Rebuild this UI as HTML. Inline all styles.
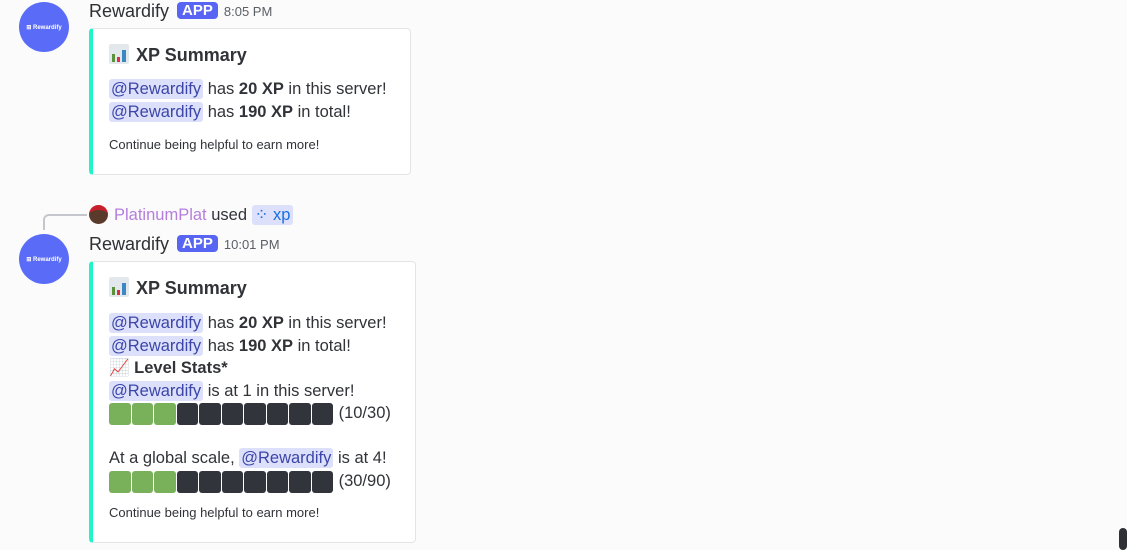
<!DOCTYPE html>
<html><head><style>
body{margin:0;width:1127px;height:550px;background:#fbfbfb;font-family:"Liberation Sans",sans-serif;color:#313338;position:relative;overflow:hidden}
.a{position:absolute}
.av{width:50px;height:50px;border-radius:50%;background:#5a6cf7;color:#fff;font-size:6px;font-weight:bold;display:flex;align-items:center;justify-content:center}
.name{font-size:18px;color:#2e3035;white-space:nowrap}
.app{display:inline-block;background:#5865f2;color:#fff;font-weight:bold;font-size:15px;line-height:17px;padding:0 5px;border-radius:4px;vertical-align:2px;margin-left:3px}
.time{font-size:13px;color:#5c5e66;margin-left:6px;vertical-align:1px}
.card{background:#fff;border:1px solid #e3e4e7;border-left:4px solid #1ff5c6;border-radius:4px;box-sizing:border-box}
.t{position:absolute;left:16px;font-size:16.5px;white-space:nowrap;line-height:23px}
.m{background:#dde0fb;color:#3b46a8;border-radius:3px;padding:1px 2px}
.h{font-size:18px;font-weight:bold}
.f{font-size:13px}
.bar{display:inline-flex;vertical-align:middle}
.bar i{width:21.5px;height:22px;margin-right:1px;border-radius:3px;background:#31353b;display:inline-block}
.bar i.g{background:#78b159}
.ic{display:inline-block;width:20px;height:20px;background:#e3e8ec;border-radius:2px;vertical-align:-3px;margin-right:7px;position:relative}
</style></head><body>
<div class="a av" style="left:19px;top:2px">⊞ Rewardify</div>
<div class="a name" style="left:89px;top:1px">Rewardify <span class="app">APP</span><span class="time">8:05 PM</span></div>
<div class="a card" style="left:89px;top:28px;width:322px;height:147px">
 <div class="t h" style="top:15px"><span class="ic"><b style="position:absolute;left:3px;bottom:2px;width:3px;height:8px;background:#5c913b"></b><b style="position:absolute;left:8px;bottom:2px;width:3px;height:5px;background:#dd2e44"></b><b style="position:absolute;left:13px;bottom:2px;width:4px;height:12px;background:#3b88c3"></b></span>XP Summary</div>
 <div class="t" style="top:49px"><span class="m">@Rewardify</span> has <b>20 XP</b> in this server!</div>
 <div class="t" style="top:72px"><span class="m">@Rewardify</span> has <b>190 XP</b> in total!</div>
 <div class="t f" style="top:104px">Continue being helpful to earn more!</div>
</div>
<div class="a" style="left:43px;top:214px;width:42px;height:14px;border-left:2px solid #c4c6cb;border-top:2px solid #c4c6cb;border-top-left-radius:6px"></div>
<div class="a" style="left:89px;top:205px;width:19px;height:19px;border-radius:50%;background:#5a3a2a;border-top:5px solid #c8202b;box-sizing:border-box"></div>
<div class="a" style="left:114px;top:205px;font-size:16.5px;white-space:nowrap"><span style="color:#b57edc">PlatinumPlat</span> used <span style="background:#dde0fb;color:#1a6fe0;border-radius:3px;padding:1px 3px">⁘ xp</span></div>
<div class="a av" style="left:19px;top:234px">⊞ Rewardify</div>
<div class="a name" style="left:89px;top:234px">Rewardify <span class="app">APP</span><span class="time">10:01 PM</span></div>
<div class="a card" style="left:89px;top:261px;width:327px;height:282px">
 <div class="t h" style="top:15px"><span class="ic"><b style="position:absolute;left:3px;bottom:2px;width:3px;height:8px;background:#5c913b"></b><b style="position:absolute;left:8px;bottom:2px;width:3px;height:5px;background:#dd2e44"></b><b style="position:absolute;left:13px;bottom:2px;width:4px;height:12px;background:#3b88c3"></b></span>XP Summary</div>
 <div class="t" style="top:50px"><span class="m">@Rewardify</span> has <b>20 XP</b> in this server!</div>
 <div class="t" style="top:73px"><span class="m">@Rewardify</span> has <b>190 XP</b> in total!</div>
 <div class="t" style="top:95px"><b><span style="color:#dd2e44">📈</span> Level Stats*</b></div>
 <div class="t" style="top:118px"><span class="m">@Rewardify</span> is at 1 in this server!</div>
 <div class="t" style="top:140px"><span class="bar"><i class="g"></i><i class="g"></i><i class="g"></i><i></i><i></i><i></i><i></i><i></i><i></i><i></i></span> (10/30)</div>
 <div class="t" style="top:185px">At a global scale, <span class="m">@Rewardify</span> is at 4!</div>
 <div class="t" style="top:208px"><span class="bar"><i class="g"></i><i class="g"></i><i class="g"></i><i></i><i></i><i></i><i></i><i></i><i></i><i></i></span> (30/90)</div>
 <div class="t f" style="top:239px">Continue being helpful to earn more!</div>
</div>
<div class="a" style="left:1119px;top:528px;width:8px;height:22px;background:#2e3035;border-radius:4px"></div>
</body></html>
